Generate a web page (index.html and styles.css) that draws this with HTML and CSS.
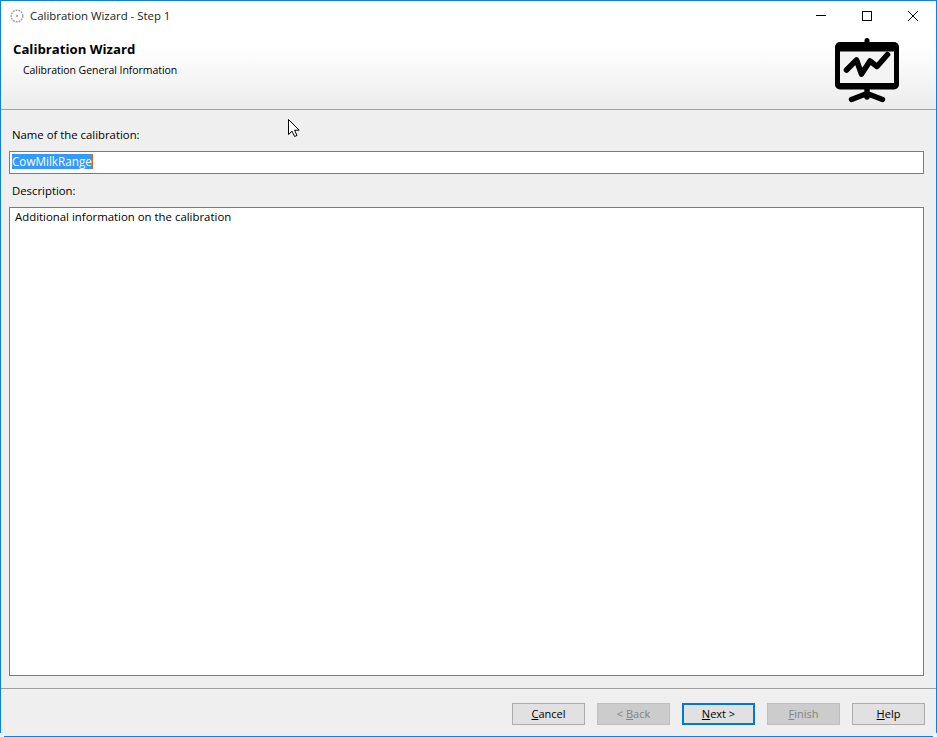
FILE: index.html
```html
<!DOCTYPE html>
<html lang="en">
<head>
<meta charset="utf-8">
<title>Calibration Wizard - Step 1</title>
<link rel="stylesheet" href="styles.css">
</head>
<body>
<div class="window">
  <header class="banner">
    <div class="titlebar">
      <svg class="app-icon" width="16" height="16" viewBox="0 0 16 16"><circle cx="8" cy="8" r="5.8" fill="#fff" stroke="#9a9a9a" stroke-width="1.4" stroke-dasharray="1.8 1"/><circle cx="8" cy="8" r="1.2" fill="#e0a080"/></svg>
      <span class="title-text">Calibration Wizard - Step 1</span>
      <div class="win-controls">
        <svg width="46" height="30" viewBox="0 0 46 30"><path d="M18 14.5H28" stroke="#000" fill="none"/></svg>
        <svg width="46" height="30" viewBox="0 0 46 30"><rect x="18.5" y="10.5" width="9" height="9" stroke="#000" fill="none"/></svg>
        <svg width="46" height="30" viewBox="0 0 46 30"><path d="M18 10L28 20M28 10L18 20" stroke="#000" fill="none"/></svg>
      </div>
    </div>
    <div class="banner-body">
      <div class="banner-text">
        <div class="banner-title">Calibration Wizard</div>
        <div class="banner-sub">Calibration General Information</div>
      </div>
      <svg class="banner-icon" width="66" height="66" viewBox="0 0 66 66">
        <path d="M33 3.5V7" stroke="#000" stroke-width="5" stroke-linecap="round" fill="none"/>
        <rect x="1" y="5" width="64" height="47.5" rx="5" fill="#000"/>
        <rect x="6" y="14.5" width="54" height="31.5" fill="#f4f4f4"/>
        <path d="M12.5 33L22.5 23L27.5 37L36 24L43 29.5L53.5 17.5" stroke="#000" stroke-width="5.6" stroke-linecap="round" stroke-linejoin="round" fill="none"/>
        <path d="M33 52V60M17.5 62.5L33 56.5L48.5 62.5" stroke="#000" stroke-width="5.4" stroke-linecap="round" stroke-linejoin="round" fill="none"/>
      </svg>
    </div>
  </header>
  <main class="content">
    <label class="field-label name-label">Name of the calibration:</label>
    <div class="text-input"><span class="selected">CowMilkRange</span></div>
    <label class="field-label desc-label">Description:</label>
    <div class="text-area">Additional information on the calibration</div>
  </main>
  <footer class="footer">
    <button class="btn"><u>C</u>ancel</button>
    <button class="btn disabled">&lt; <u>B</u>ack</button>
    <button class="btn primary"><u>N</u>ext &gt;</button>
    <button class="btn disabled"><u>F</u>inish</button>
    <button class="btn"><u>H</u>elp</button>
  </footer>
  <span class="corner corner-left"></span>
  <span class="corner corner-right"></span>
  <svg class="cursor" width="14" height="20" viewBox="0 0 14 20"><path d="M1.5 1.5V16.5L5 13.2L7.6 18.5L10 17.4L7.5 12.2H12.2Z" fill="#fff" stroke="#000" stroke-width="1"/></svg>
</div>
</body>
</html>
```
FILE: styles.css
```css
* { box-sizing: border-box; }
html, body { margin: 0; padding: 0; }
body {
  width: 937px;
  height: 737px;
  overflow: hidden;
  background: #fff;
  font-family: "Open Sans", "Noto Sans", sans-serif;
  font-size: 11px;
  color: #000;
}
.window {
  position: relative;
  width: 937px;
  height: 737px;
  display: flex;
  flex-direction: column;
  background: #efefef;
  border: 1px solid #0c82e0;
}
.banner {
  height: 109px;
  flex: none;
  background: linear-gradient(to bottom, #fff 0, #fff 45px, #ececec 108px);
  border-bottom: 1px solid #a0a0a0;
  display: flex;
  flex-direction: column;
}
.titlebar {
  height: 30px;
  display: flex;
  align-items: center;
  padding-left: 8px;
}
.app-icon { flex: none; margin-bottom: 1px; }
.title-text { margin-left: 5px; margin-bottom: 2px; font-size: 11.4px; color: #222; }
.win-controls { margin-left: auto; display: flex; }
.banner-body {
  flex: 1;
  display: flex;
  justify-content: space-between;
  padding-left: 12px;
  padding-right: 36px;
}
.banner-title { margin-top: 9px; font-weight: 700; font-size: 13.2px; line-height: 18px; }
.banner-sub { margin-top: 4px; margin-left: 10px; font-size: 10.5px; line-height: 16px; letter-spacing: -0.05px; }
.banner-icon { margin-top: 6px; }
.content {
  flex: 1;
  padding: 0 12px 0 8px;
  display: flex;
  flex-direction: column;
  background: #efefef;
}
.field-label { display: block; padding-left: 3px; font-size: 11.35px; line-height: 16px; }
.name-label { margin-top: 17px; }
.text-input {
  margin-top: 8px;
  height: 23px;
  background: #fff;
  border: 1px solid #7a7a7a;
  padding: 2px 2px;
  font-size: 11.7px;
  line-height: 15px;
}
.selected { display: inline-block; background: #3399ff; color: #fff; border-right: 1px solid #d9641a; }
.desc-label { margin-top: 9px; }
.text-area {
  margin-top: 8px;
  height: 469px;
  background: #fff;
  border: 1px solid #7a7a7a;
  padding: 1px 5px;
  font-size: 11.4px;
  line-height: 16px;
}
.footer {
  flex: none;
  height: 48px;
  border-top: 1px solid #a0a0a0;
  background: #efefef;
  display: flex;
  justify-content: flex-end;
  gap: 12px;
  padding: 14px 11px 0 0;
}
.btn {
  width: 73px;
  height: 22px;
  padding: 0;
  background: #e1e1e1;
  border: 1px solid #adadad;
  font-family: inherit;
  font-size: 11px;
  line-height: 18px;
  color: #000;
}
.btn.primary { border: 2px solid #0078d7; }
.btn.disabled { background: #cccccc; border-color: #bfbfbf; color: #838383; }
.corner { position: absolute; bottom: -1px; width: 4px; height: 4px; background: #f6f6f6; }
.corner-left { left: -1px; }
.corner-right { right: -1px; }
.cursor { position: absolute; left: 286px; top: 117px; }
```
